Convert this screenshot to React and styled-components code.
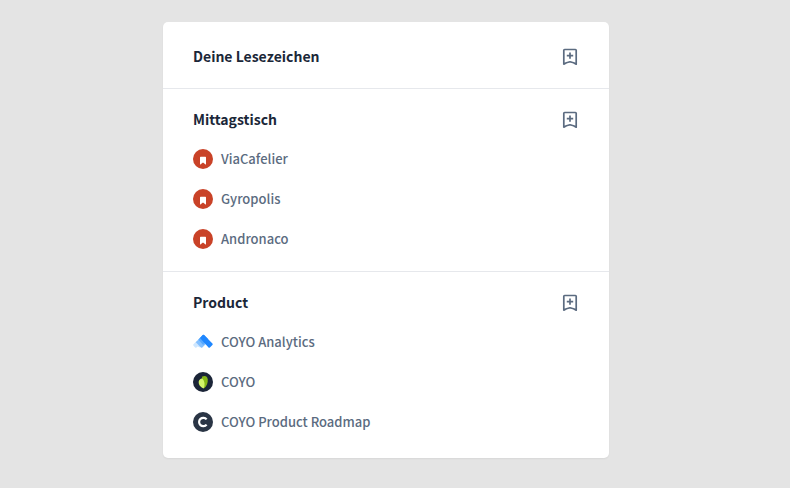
import React from 'react';
import styled, { createGlobalStyle } from 'styled-components';

const GlobalStyle = createGlobalStyle`
  * {
    box-sizing: border-box;
  }

  body {
    margin: 0;
    background-color: #e4e4e4;
    font-family: "Noto Sans CJK SC", "Noto Sans", sans-serif;
  }
`;

const Page = styled.main`
  padding: 22px 181px 30px 163px;
  @media (max-width: 640px) {
    padding: 22px 16px;
  }
`;

const Card = styled.div`
  padding: 4px 0;
  border-radius: 5px;
  background-color: #ffffff;
  box-shadow: 0 1px 2px rgba(0, 0, 0, 0.06);
`;

const Section = styled.section`
  padding: 12px 30px;

  & + & {
    border-top: 1px solid #e6e8ec;
  }
`;

const SectionHeader = styled.header`
  display: flex;
  align-items: center;
  justify-content: space-between;
  height: 38px;
`;

const SectionTitle = styled.h2`
  margin: 0;
  padding-bottom: 2px;
  font-size: 14px;
  font-weight: 700;
  line-height: 20px;
  color: #1b2738;
`;

const AddButton = styled.button`
  display: flex;
  padding: 0;
  border: 0;
  background: none;
  color: #5b6b80;
  cursor: pointer;
`;

const BookmarkList = styled.ul`
  margin: 0;
  padding: 0;
  list-style: none;
`;

const BookmarkLink = styled.a`
  display: flex;
  align-items: center;
  gap: 8px;
  height: 40px;
  font-size: 13px;
  font-weight: 500;
  line-height: 20px;
  color: #5b6b80;
  text-decoration: none;
`;

const Icon = styled.svg`
  display: block;
  flex: none;
  width: 20px;
  height: 20px;
`;

const AddBookmarkIcon = () => (
  <Icon viewBox="0 0 20 20" fill="none" stroke="currentColor" strokeWidth="1.7" aria-hidden="true">
    <path d="M5.6 2.500h10.800a.8.8 0 0 1 .8.8v13.900L14.600 15.700 11 14.800l-3.600.9-2.600 1.500V3.300a.8.8 0 0 1 .8-.8z" strokeLinejoin="round" />
    <path d="M11 5.400v6.400M7.800 8.600h6.400" />
  </Icon>
);

const BookmarkIcon = () => (
  <Icon viewBox="0 0 20 20" aria-hidden="true">
    <circle cx="10" cy="10" r="10" fill="#c94227" />
    <path d="M7.600 7.800h4.800a.6.6 0 0 1 .6.6v7.300l-3-2.100-3 2.100V8.400a.6.6 0 0 1 .6-.6z" fill="#fff" />
  </Icon>
);

const AnalyticsIcon = () => (
  <Icon viewBox="0 0 20 20" aria-hidden="true">
    <path d="M4 8.600 9 13.600l-2 2-2.500-1-1 .9a1 1 0 0 1-1.400 0L.5 13.700a1 1 0 0 1 0-1.400z" fill="#cfe7ff" />
    <path d="M7.300 5.500 13.300 11.500 9.300 15.500a1 1 0 0 1-1.400 0L2.800 10.200z" fill="#84c0ff" />
    <path d="M9.700 3.100a1 1 0 0 1 1.400 0l4 4-5 6L5.400 7.600z" fill="#56a8ff" />
    <path d="M9.700 3.100a1 1 0 0 1 1.400 0l8.300 8.400a1 1 0 0 1 0 1.400l-2.500 2.600a1 1 0 0 1-1.400 0L7 6z" fill="#1f87ff" />
  </Icon>
);

const LeafIcon = () => (
  <Icon viewBox="0 0 20 20" aria-hidden="true">
    <circle cx="10" cy="10" r="10" fill="#1b2538" />
    <path d="M8.800 4.800c2.800-1.600 5.400-1 5.900 2.400.4 3.600-1 6.800-3.500 9z" fill="#86b817" />
    <path d="M9.200 6.200C6.400 7 5.200 9 5.800 11.400c.6 2.400 2.500 4.200 5 5 1.400-3.600 1-7.200-1.600-10.200z" fill="#d3f56b" />
  </Icon>
);

const RoadmapIcon = () => (
  <Icon viewBox="0 0 20 20" aria-hidden="true">
    <circle cx="10" cy="10" r="10" fill="#2a3545" />
    <path d="M13.600 7.400a4.200 4.200 0 1 0 0 5.200" fill="none" stroke="#fff" strokeWidth="2.200" />
  </Icon>
);

const sections = [
  { title: 'Deine Lesezeichen', items: [] },
  {
    title: 'Mittagstisch',
    items: [
      { name: 'ViaCafelier', icon: BookmarkIcon },
      { name: 'Gyropolis', icon: BookmarkIcon },
      { name: 'Andronaco', icon: BookmarkIcon },
    ],
  },
  {
    title: 'Product',
    items: [
      { name: 'COYO Analytics', icon: AnalyticsIcon },
      { name: 'COYO', icon: LeafIcon },
      { name: 'COYO Product Roadmap', icon: RoadmapIcon },
    ],
  },
];

const App = () => {
  return (
    <>
      <GlobalStyle />
      <Page>
        <Card>
          {sections.map((section, index) => (
            <Section key={index}>
              <SectionHeader>
                <SectionTitle id={`section-${index}`}>{section.title}</SectionTitle>
                <AddButton type="button" aria-labelledby={`section-${index}`}>
                  <AddBookmarkIcon />
                </AddButton>
              </SectionHeader>
              {section.items.length > 0 && (
                <BookmarkList>
                  {section.items.map((item) => (
                    <li key={item.name}>
                      <BookmarkLink href="#">
                        <item.icon />
                        {item.name}
                      </BookmarkLink>
                    </li>
                  ))}
                </BookmarkList>
              )}
            </Section>
          ))}
        </Card>
      </Page>
    </>
  );
};

export default App;
